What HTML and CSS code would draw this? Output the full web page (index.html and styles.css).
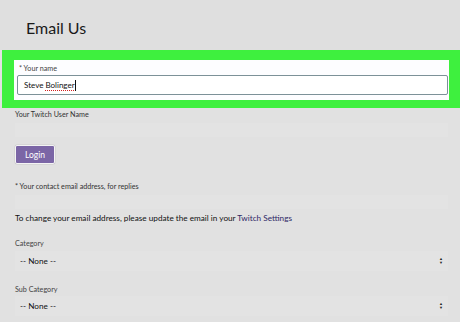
FILE: index.html
```html
<!DOCTYPE html>
<html>
<head>
<meta charset="utf-8">
<link rel="stylesheet" href="styles.css">
</head>
<body>
<div class="page">
  <header class="head"><h1 class="title">Email Us</h1></header>
  <section class="highlight">
    <div class="card">
      <div class="label">* Your name</div>
      <div class="input"><span>Steve <span class="spell">Bolinger</span></span><span class="caret"></span></div>
    </div>
  </section>
  <main class="content">
    <div class="label lbl-twitch">Your Twitch User Name</div>
    <div class="ghost"></div>
    <button class="btn">Login</button>
    <div class="label lbl-contact">* Your contact email address, for replies</div>
    <div class="ghost ghost-sm"></div>
    <p class="note">To change your email address, please update the email in your <a class="link">Twitch Settings</a></p>
    <div class="label lbl-cat">Category</div>
    <div class="select"><span>-- None --</span><span class="arrows"><span>▲</span><span>▼</span></span></div>
    <div class="label lbl-sub">Sub Category</div>
    <div class="select sel-last"><span>-- None --</span><span class="arrows"><span>▲</span><span>▼</span></span></div>
  </main>
</div>
</body>
</html>
```
FILE: styles.css
```css
* { box-sizing: border-box; }
html, body { margin: 0; padding: 0; }
body {
  background: #e1e1e1;
  font-family: Lato, "Open Sans", sans-serif;
  color: #222;
  width: 460px;
  height: 322px;
  overflow: hidden;
}
.page { display: flex; flex-direction: column; }
.head {
  height: 50px;
  padding-left: 26px;
  display: flex;
  align-items: center;
  background: #dfdfdf;
}
.title {
  margin: 0;
  font-weight: 400;
  font-size: 16px;
  color: #1a1a1a;
  padding-top: 4px;
}
.highlight {
  background: #3ef03e;
  padding: 10px 11px 8px 12px;
  margin-left: 2px;
}
.card {
  background: #fdfdff;
  height: 40px;
  padding: 4px 1px 0 3px;
  display: flex;
  flex-direction: column;
}
.label {
  font-size: 7.2px;
  color: #444;
  line-height: 10px;
}
.card .label { padding-left: 2px; height: 11px; }
.input {
  height: 20px;
  border: 1px solid #7c9198;
  border-radius: 2px;
  background: #fff;
  display: flex;
  align-items: center;
  padding-left: 6px;
  font-size: 8px;
  color: #111;
}
.spell {
  text-decoration: underline dotted #d02020;
  text-decoration-thickness: 1px;
  text-underline-offset: 1.5px;
}
.caret {
  display: inline-block;
  width: 1px;
  height: 11px;
  background: #111;
  margin-left: 0.5px;
}
.content {
  padding: 2px 12px 0 15px;
  display: flex;
  flex-direction: column;
  align-items: flex-start;
}
.lbl-twitch { font-size: 7.2px; color: #333; }
.ghost {
  align-self: stretch;
  height: 14px;
  margin-top: 3px;
  background: #e3e3e3;
}
.btn {
  margin-top: 8px;
  width: 40px;
  height: 19px;
  border: 1px solid #f4f4f4;
  border-radius: 2px;
  background: #7b66a6;
  color: #fff;
  font-family: inherit;
  font-size: 8.5px;
  padding: 0;
  box-shadow: 0 0 0 0.5px #ccc;
}
.lbl-contact { margin-top: 18px; color: #333; }
.ghost-sm { height: 14px; margin-top: 3px; }
.note {
  margin: 3px 0 0 0;
  font-size: 8.2px;
  color: #111;
  line-height: 12px;
}
.link { color: #2e2766; }
.lbl-cat { margin-top: 15px; }
.lbl-sub { margin-top: 14px; }
.select {
  align-self: stretch;
  height: 20px;
  margin-top: 2px;
  background: #e3e3e3;
  display: flex;
  align-items: center;
  justify-content: space-between;
  padding: 0 5px 0 5px;
  font-size: 8.2px;
  color: #111;
}
.sel-last { margin-top: 1px; }
.arrows {
  display: flex;
  flex-direction: column;
  font-size: 4px;
  line-height: 4px;
  color: #222;
}
```
